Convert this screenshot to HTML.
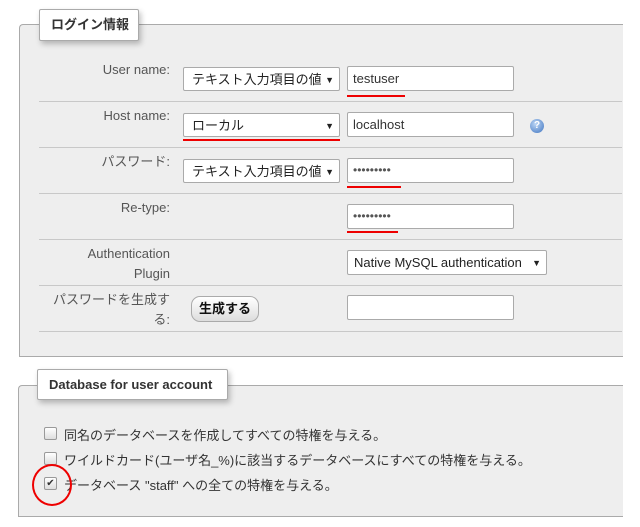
<!DOCTYPE html>
<html><head><meta charset="utf-8"><style>
body{margin:0;width:640px;height:527px;background:#fff;position:relative;overflow:hidden;font-family:"Liberation Sans","Noto Sans CJK JP",sans-serif;font-size:13px;color:#333}
.a{position:absolute}
.fs{position:absolute;background:#eee;border:1px solid #aaa;border-right:none;border-radius:4px 0 0 0}
.lg{position:absolute;background:#fff;border:1px solid #aaa;border-radius:2px;box-shadow:2px 3px 6px rgba(0,0,0,.25);font-weight:bold;font-size:13px;color:#333;box-sizing:border-box;padding-left:11px;line-height:30px;white-space:nowrap}
.ln{position:absolute;left:39px;width:583px;height:1px;background:#c8c8c8}
.lb{position:absolute;right:470px;text-align:right;color:#555;font-size:13px;line-height:20px}
.in{position:absolute;background:#fff;border:1px solid #aaa;border-radius:2px;box-sizing:border-box;font-size:13px;padding-left:5px;line-height:23px;color:#333}
.sel{position:absolute;background:#fff;border:1px solid #aaa;border-radius:2px;box-sizing:border-box;font-size:13px;padding-left:8px;line-height:24px;color:#222;white-space:nowrap;overflow:hidden}
.sel:after{content:"▼";position:absolute;right:5px;top:0;font-size:9px;background:#fff;padding-left:4px}
.red{position:absolute;height:2px;background:#e00}
.cb{position:absolute;left:44px;width:11px;height:11px;border:1px solid #999;border-radius:2px;background:linear-gradient(#fff,#ddd)}
.ct{position:absolute;left:64px;font-size:13px;color:#333}
.dots{font-family:"Liberation Sans",sans-serif;font-size:12px;letter-spacing:0;color:#555}
</style></head><body>
<div class="fs" style="left:19px;top:24px;width:603px;height:331px"></div>
<div class="lg" style="left:39px;top:9px;width:100px;height:32px">ログイン情報</div>
<div class="ln" style="top:101px"></div><div class="ln" style="top:147px"></div><div class="ln" style="top:193px"></div><div class="ln" style="top:239px"></div><div class="ln" style="top:285px"></div><div class="ln" style="top:331px"></div>

<div class="lb" style="top:60px">User name:</div>
<div class="sel" style="left:183px;top:67px;width:157px;height:24px">テキスト入力項目の値</div>
<div class="in" style="left:347px;top:66px;width:167px;height:25px">testuser</div>
<div class="red" style="left:347px;top:95px;width:58px"></div>

<div class="lb" style="top:106px">Host name:</div>
<div class="sel" style="left:183px;top:113px;width:157px;height:24px">ローカル</div>
<div class="red" style="left:183px;top:139px;width:157px"></div>
<div class="in" style="left:347px;top:112px;width:167px;height:25px">localhost</div>
<div class="a" style="left:530px;top:119px;width:14px;height:14px;border-radius:50%;background:radial-gradient(circle at 40% 35%,#bcd6f5,#3f74c0);color:#fff;font-size:10px;font-weight:bold;text-align:center;line-height:14px">?</div>

<div class="lb" style="top:152px">パスワード:</div>
<div class="sel" style="left:183px;top:159px;width:157px;height:24px">テキスト入力項目の値</div>
<div class="in dots" style="left:347px;top:158px;width:167px;height:25px">•••••••••</div>
<div class="red" style="left:347px;top:186px;width:54px"></div>

<div class="lb" style="top:198px">Re-type:</div>
<div class="in dots" style="left:347px;top:204px;width:167px;height:25px">•••••••••</div>
<div class="red" style="left:347px;top:231px;width:51px"></div>

<div class="lb" style="top:244px">Authentication<br>Plugin</div>
<div class="sel" style="left:347px;top:250px;width:200px;height:25px;font-size:13px;padding-left:6px">Native MySQL authentication</div>

<div class="lb" style="top:290px">パスワードを生成す<br>る:</div>
<div class="a" style="left:191px;top:296px;width:68px;height:26px;border:1px solid #aaa;border-radius:9px;background:linear-gradient(#fff,#ddd);box-sizing:border-box;text-align:center;font-weight:bold;line-height:24px;font-size:13px;color:#111">生成する</div>
<div class="in" style="left:347px;top:295px;width:167px;height:25px"></div>

<div class="fs" style="left:18px;top:385px;width:604px;height:130px"></div>
<div class="lg" style="left:37px;top:369px;width:191px;height:31px">Database for user account</div>
<div class="cb" style="top:427px"></div><div class="ct" style="top:425px">同名のデータベースを作成してすべての特権を与える。</div>
<div class="cb" style="top:452px"></div><div class="ct" style="top:450px">ワイルドカード(ユーザ名_%)に該当するデータベースにすべての特権を与える。</div>
<div class="cb" style="top:477px;font-size:10px;line-height:11px;text-align:center">✔</div><div class="ct" style="top:475px">データベース "staff" への全ての特権を与える。</div>
<div class="a" style="left:32px;top:464px;width:36px;height:38px;border:2px solid #e00;border-radius:50%"></div>
</body></html>
